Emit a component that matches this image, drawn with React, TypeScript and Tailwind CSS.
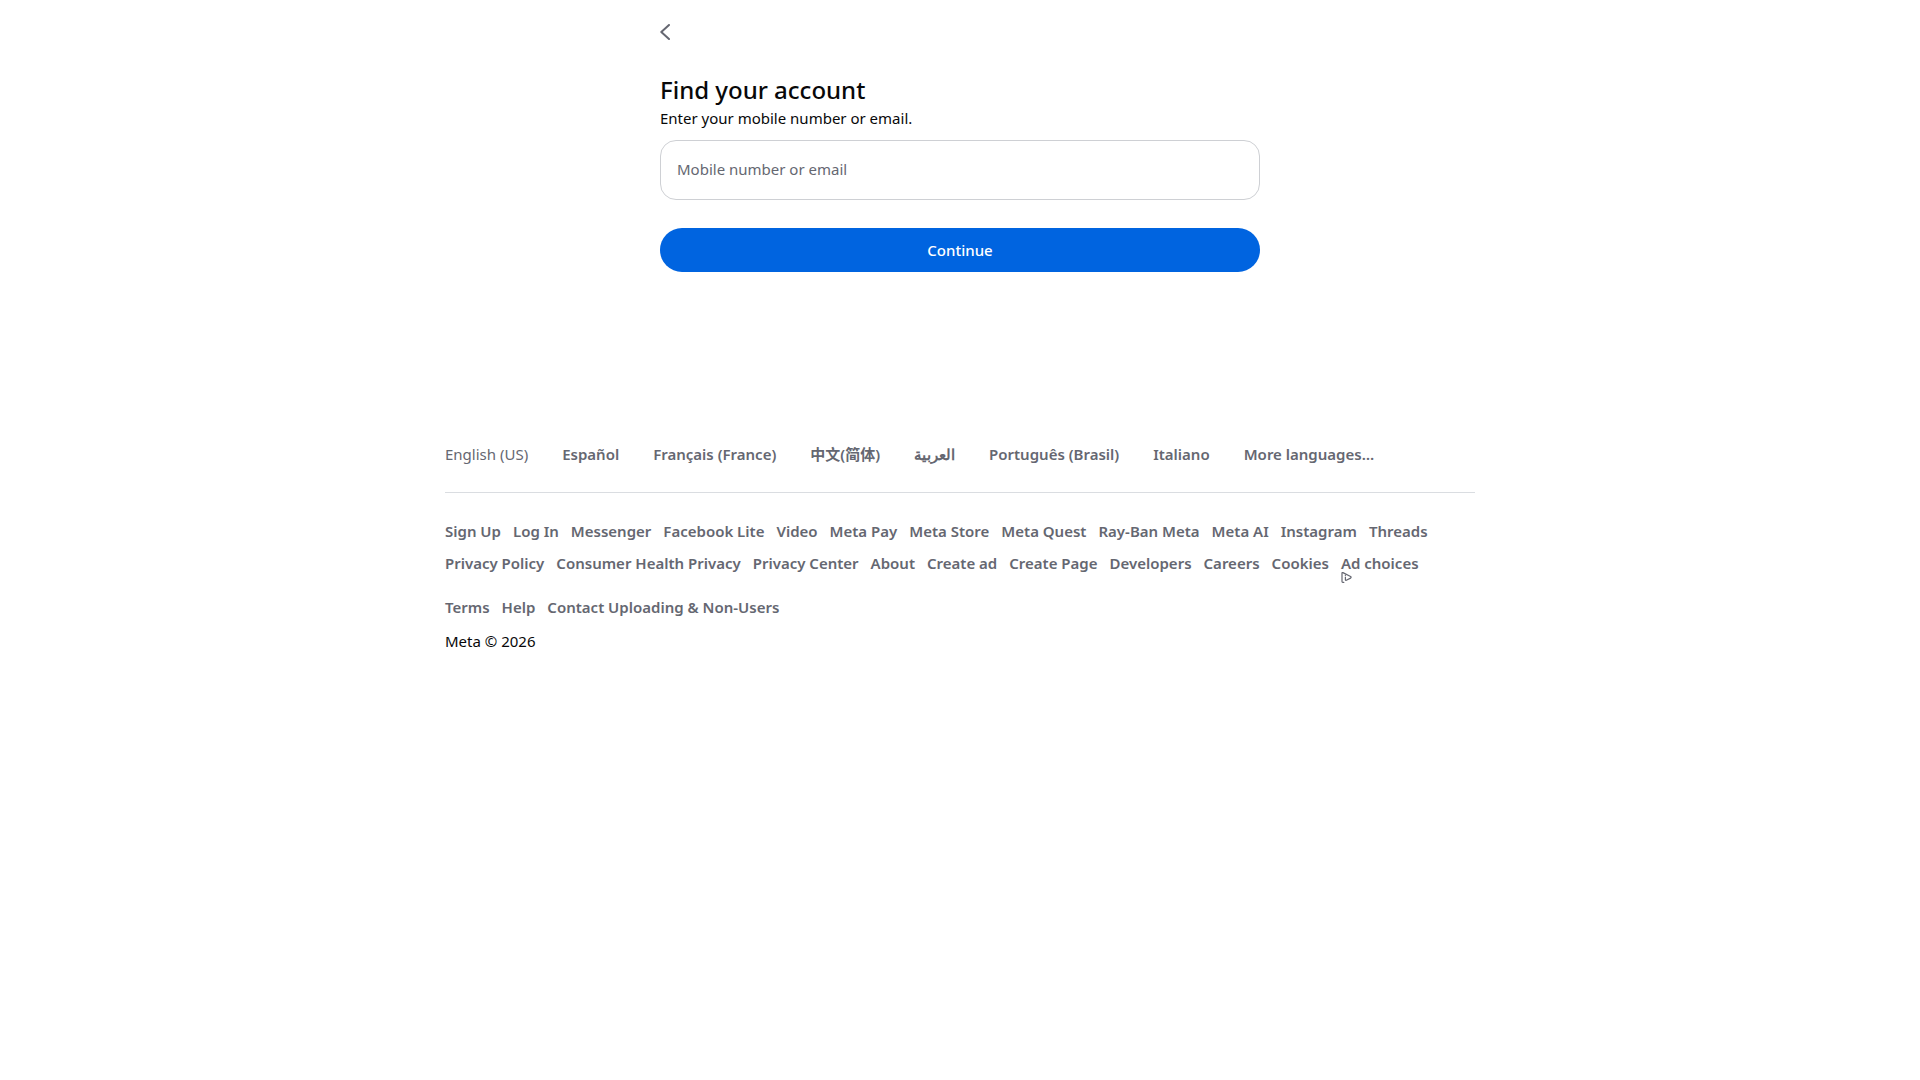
import React from 'react';

const languages = ['Español', 'Français (France)', '中文(简体)', 'العربية', 'Português (Brasil)', 'Italiano', 'More languages…'];

const footerLinks = [
  'Sign Up', 'Log In', 'Messenger', 'Facebook Lite', 'Video', 'Meta Pay', 'Meta Store', 'Meta Quest', 'Ray-Ban Meta',
  'Meta AI', 'Instagram', 'Threads', 'Privacy Policy', 'Consumer Health Privacy', 'Privacy Center', 'About', 'Create ad',
  'Create Page', 'Developers', 'Careers', 'Cookies', 'Ad choices', 'Terms', 'Help', 'Contact Uploading & Non-Users'
];

function BackIcon() {
  return <svg viewBox="0 0 10 16" className="w-[10px] h-4" fill="none" stroke="currentColor" strokeWidth="2" strokeLinecap="round" strokeLinejoin="round" aria-hidden="true">
      <path d="M9 1 L1.3 8 L9 15" />
    </svg>;
}

function AdChoicesIcon() {
  return <svg viewBox="0 1 12 12" className="block w-3 h-3 overflow-visible" fill="none" stroke="currentColor" strokeLinecap="round" strokeLinejoin="round" aria-hidden="true">
      <path d="M2.8 10.4 H1.8 Q1 10.4 1 9.6 V1.2 Q1 0.2 1.9 0.6 L9.6 4.5 Q10.6 5.3 9.6 6.1 L5.3 8.2 Q4.4 8.6 4.4 7.7 V5" strokeWidth="1.2" />
      <circle cx="4.4" cy="3.3" r="0.7" fill="currentColor" stroke="none" />
    </svg>;
}

function AccountForm() {
  return <main className="w-full max-w-[600px] mx-auto">
      <button type="button" aria-label="Back" className="flex items-center h-16 text-[#656771] cursor-pointer">
        <BackIcon />
      </button>
      <form onSubmit={e => e.preventDefault()}>
        <h1 className="mt-3 text-2xl leading-7 font-medium text-[#080809]">Find your account</h1>
        <label htmlFor="identifier" className="block mt-1 text-[15px] leading-5 text-[#080809]">
          Enter your mobile number or email.
        </label>
        <input id="identifier" type="text" placeholder="Mobile number or email" className="block w-full h-[60px] mt-3 px-4 pb-[2px] rounded-2xl border border-[#ced0d4] text-[15px] text-[#080809] placeholder:text-[#656771] outline-none focus:border-[#0064e0]" />
        <button type="submit" className="block w-full h-11 mt-7 rounded-full bg-[#0064e0] text-[15px] font-medium text-white cursor-pointer">
          Continue
        </button>
      </form>
    </main>;
}

function Footer() {
  return <footer className="w-full max-w-[1030px] mx-auto mt-[172px] text-[15px] leading-5 text-[#656771]">
      <ul className="flex flex-wrap gap-x-[34px] gap-y-3 pb-7 border-b border-[#dadde1]">
        <li>English (US)</li>
        {languages.map(language => <li key={language}>
            <a href="#" className="font-semibold hover:underline">{language}</a>
          </li>)}
      </ul>
      <ul className="flex flex-wrap gap-3 mt-7">
        {footerLinks.map(link => <li key={link}>
            <a href="#" className="block font-semibold hover:underline">
              {link}
              {link === 'Ad choices' && <AdChoicesIcon />}
            </a>
          </li>)}
      </ul>
      <p className="mt-[14px] text-[#080809]">Meta © 2026</p>
    </footer>;
}

export default function App() {
  return <div className="min-h-screen bg-white font-['Noto_Sans','Noto_Sans_CJK_SC',sans-serif]">
      <AccountForm />
      <Footer />
    </div>;
}
